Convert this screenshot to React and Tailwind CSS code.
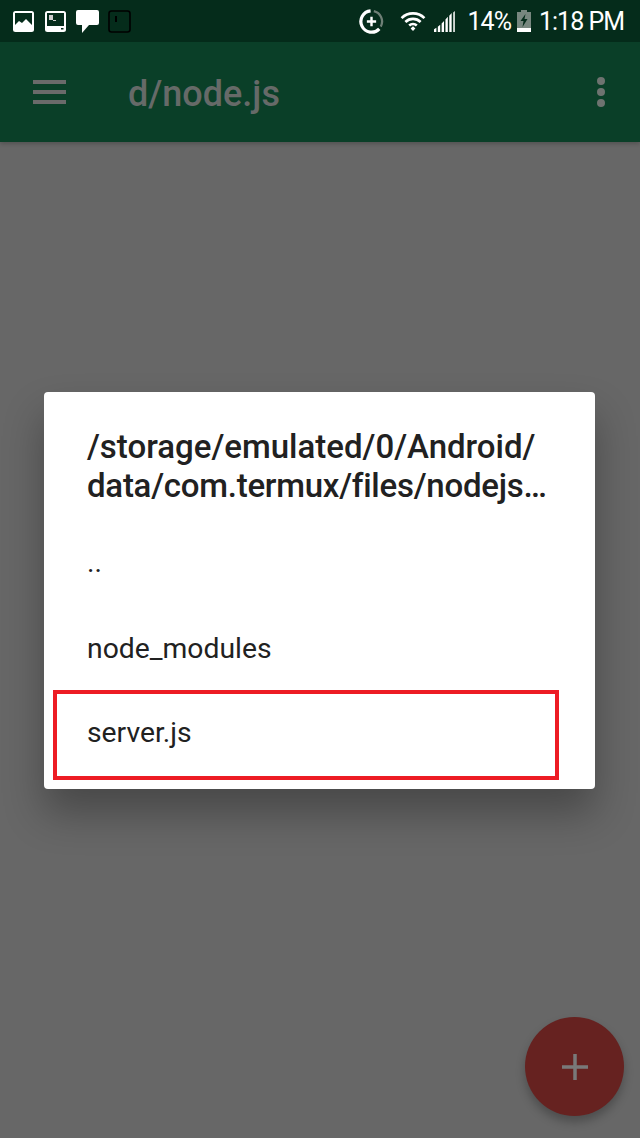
import React from 'react';

const StatusLeftIcons = () => (
  <div className="flex items-center gap-[11px] pl-[13px]">
    {/* gallery */}
    <svg width="21" height="21" viewBox="0 0 21 21">
      <rect x="0" y="0" width="21" height="21" rx="2.5" fill="#fff" />
      <rect x="2" y="2" width="17" height="15" fill="#052c1b" />
      <path d="M2 14l4-4 3 2 4-4 6 6v3H2z" fill="#fff" />
    </svg>
    {/* terminal */}
    <svg width="21" height="21" viewBox="0 0 21 21">
      <rect x="0" y="0" width="21" height="21" rx="2.5" fill="#fff" />
      <rect x="2" y="2" width="17" height="13" fill="#052c1b" />
      <rect x="4" y="4" width="4" height="5" fill="#ccc" />
      <rect x="8" y="9" width="3" height="1" fill="#ccc" />
      <rect x="16" y="17" width="2.500" height="1.500" fill="#052c1b" />
    </svg>
    {/* chat bubble */}
    <svg width="23" height="23" viewBox="0 0 23 23" className="-ml-[1px]">
      <path d="M2 0h19a2 2 0 0 1 2 2v11a2 2 0 0 1-2 2H13l-7 8v-8H2a2 2 0 0 1-2-2V2a2 2 0 0 1 2-2z" fill="#fff" />
    </svg>
    {/* dark notification square */}
    <svg width="23" height="23" viewBox="0 0 23 23" className="-ml-[2px]">
      <rect x="1" y="1" width="21" height="21" rx="2.5" fill="none" stroke="#000" strokeWidth="1.6" />
      <rect x="7" y="6" width="2" height="6" fill="#000" />
    </svg>
  </div>
);

const StatusRightIcons = () => (
  <div className="flex items-center pr-[16px] text-[25px] leading-none tracking-[-1px] text-white">
    {/* data saver */}
    <svg width="25" height="25" viewBox="0 0 27 27" className="mr-[16px]">
      <path d="M16 2.300A11.500 11.500 0 0 1 23.500 19" fill="none" stroke="#6f7f76" strokeWidth="2.500" />
      <path d="M12.500 2.050A11.500 11.500 0 1 0 21.900 21.400" fill="none" stroke="#fff" strokeWidth="3.500" />
      <path d="M13.500 8.500v10M8.500 13.500h10" stroke="#fff" strokeWidth="2.600" />
    </svg>
    {/* wifi */}
    <svg width="26" height="20" viewBox="0 0 27 21" className="mr-[8px]">
      <path d="M1.500 7.500a17 17 0 0 1 24 0M5.500 11.500a11.500 11.500 0 0 1 16 0M9.500 15.200a6 6 0 0 1 8 0" fill="none" stroke="#fff" strokeWidth="2.800" />
      <path d="M11 18.500l2.500-2.500 2.500 2.500-2.500 2.500z" fill="#fff" />
    </svg>
    {/* signal */}
    <svg width="21" height="21" viewBox="0 0 22 22" className="mr-[13px]">
      <path d="M0 19l2.500-1.500V22H0zM4 16.500l2.500-2V22H4zM8 13l2.500-2.500V22H8zM12 9l2.500-3V22H12zM16 5l2.500-3V22H16z" fill="#fff" />
      <path d="M20 1.500l2-1.500v22h-2z" fill="#cfd6d2" />
    </svg>
    <span>14%</span>
    {/* battery */}
    <svg width="14" height="22" viewBox="0 0 14 22" className="ml-[6px] mr-[8px]">
      <path d="M4 0h6v2h4v20H0V2h4z" fill="#78877f" />
      <path d="M0 18h14v4H0z" fill="#fff" />
      <path d="M8.500 4L3.500 11h3l-1 6 5-8h-3z" fill="#052c1b" />
    </svg>
    <span>1:18 PM</span>
  </div>
);

const App = () => {
  return (
    <div className="relative flex h-[1138px] w-[640px] flex-col overflow-hidden bg-[#676767] font-['Roboto',sans-serif]">
      <div className="flex h-[42px] shrink-0 items-center justify-between bg-[#052c1b]">
        <StatusLeftIcons />
        <StatusRightIcons />
      </div>

      <div className="flex h-[100px] shrink-0 items-center justify-between bg-[#0a3f28] pl-[33px] pr-[35px] shadow-[0_2px_4px_rgba(0,0,0,0.2)]">
        <div className="flex items-center">
          <div className="flex w-[33px] flex-col gap-[6px]">
            <div className="h-[4px] bg-[#6a6a6a]" />
            <div className="h-[4px] bg-[#6a6a6a]" />
            <div className="h-[4px] bg-[#6a6a6a]" />
          </div>
          <div className="ml-[62px] pt-[3px] text-[36px] font-medium leading-none text-[#666a68]">d/node.js</div>
        </div>
        <div className="flex flex-col gap-[3px]">
          <div className="h-[8px] w-[8px] rounded-full bg-[#6e7370]" />
          <div className="h-[8px] w-[8px] rounded-full bg-[#6e7370]" />
          <div className="h-[8px] w-[8px] rounded-full bg-[#6e7370]" />
        </div>
      </div>

      {/* file picker dialog */}
      <div className="absolute left-[44px] top-[392px] flex h-[397px] w-[551px] flex-col rounded-[4px] bg-white text-[#212121] shadow-[0_24px_40px_rgba(0,0,0,0.3)]">
        <div className="pl-[43px] pt-[35px] text-[33px] font-medium leading-[40px]">
          <div className="whitespace-nowrap">/storage/emulated/0/Android/</div>
          <div className="-mt-[1px] whitespace-nowrap tracking-[-0.25px]">data/com.termux/files/nodejs…</div>
        </div>
        <div className="mt-[14px] flex h-[86px] shrink-0 items-center pl-[43px] text-[28.3px] leading-none">..</div>
        <div className="flex h-[86px] shrink-0 items-center pl-[43px] text-[28.3px] leading-none">node_modules</div>
        <div className="-mt-[2px] ml-[9px] flex h-[90px] w-[506px] shrink-0 items-center border-[4px] border-[#ed1c24] pb-[4px] pl-[30px] text-[28.3px] leading-none">server.js</div>
      </div>

      {/* fab */}
      <div className="absolute left-[525px] top-[1017px] flex h-[99px] w-[99px] items-center justify-center rounded-full bg-[#662220] shadow-[0_6px_10px_rgba(0,0,0,0.25)]">
        <svg width="26" height="26" viewBox="0 0 26 26">
          <path d="M11.250 0h3.500v26h-3.500zM0 11.250h26v3.500H0z" fill="#797979" />
        </svg>
      </div>
    </div>
  );
};

export default App;
